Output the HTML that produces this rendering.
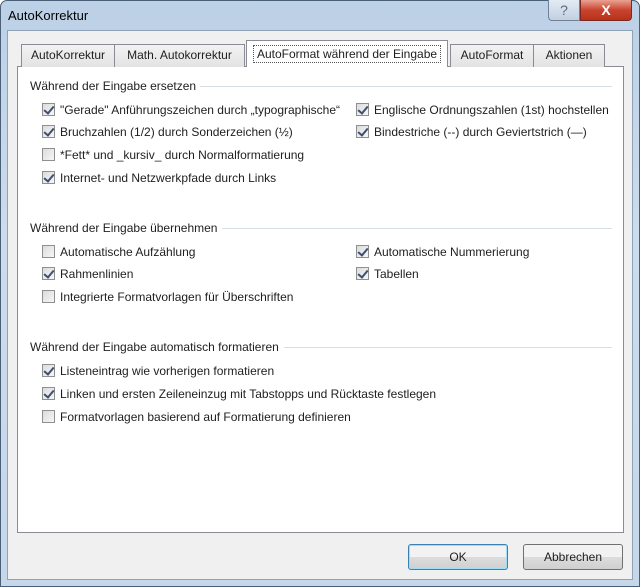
<!DOCTYPE html>
<html><head><meta charset="utf-8"><style>
*{margin:0;padding:0;box-sizing:border-box}
body{width:640px;height:587px;overflow:hidden;font-family:"Liberation Sans",sans-serif;font-size:12px;color:#1e1e1e;background:#fff}
.frame{position:absolute;left:0;top:0;width:640px;height:587px;background:linear-gradient(#bcd0e6,#cddcec 40%,#c6d7ea);border:1px solid #4a5f78;border-radius:7px 7px 0 0}
.title{position:absolute;left:8px;top:8px;font-size:13px;color:#000}
.help{position:absolute;left:548px;top:0;width:32px;height:21px;border:1px solid #6f8299;border-top:none;border-radius:0 0 0 4px;background:linear-gradient(#e3ebf4,#c2d0df);text-align:center;color:#5a6b80;font-size:14px;line-height:20px}
.close{position:absolute;left:580px;top:0;width:52px;height:21px;border:1px solid #7a2a20;border-top:none;border-radius:0 0 4px 0;background:linear-gradient(#e9a394,#c9442e 50%,#b8301a);text-align:center;color:#fff;font-weight:bold;font-size:14px;line-height:20px}
.client{position:absolute;left:7px;top:30px;width:626px;height:550px;background:#f0f0f0;border:1px solid #8ea2b8}
.panel{position:absolute;left:17px;top:66px;width:607px;height:467px;background:#fff;border:1px solid #898c95}
.tab{position:absolute;top:44px;height:23px;border:1px solid #898c95;border-bottom:none;background:linear-gradient(#f2f2f2,#e3e3e3);text-align:center;line-height:21px}
.tab.sel{top:40px;height:27px;background:#fff;line-height:27px}
.tab.sel span{border:1px dotted #555;padding:1px 3px}
.h{position:absolute;left:30px;color:#1e1e1e}
.line{position:absolute;height:1px;background:#d5dfe5;right:28px}
.cb{position:absolute;width:13px;height:13px;border:1px solid #8f8f8f;background:linear-gradient(135deg,#dcdcdc,#f6f6f6)}
.cb.c::after{content:"";position:absolute;left:3px;top:0px;width:4px;height:8px;border:solid #3c4f70;border-width:0 2px 2px 0;transform:rotate(40deg)}
.t{position:absolute;white-space:nowrap}
.btn{position:absolute;top:544px;width:100px;height:26px;border:1px solid #707070;border-radius:3px;background:linear-gradient(#f2f2f2 50%,#dddddd 50%,#cfcfcf);text-align:center;line-height:24px}
.btn.ok{border-color:#3c7fb1;box-shadow:inset 0 0 0 1px #9fdcf5}
</style></head><body>
<div class="frame"></div>
<div class="title">AutoKorrektur</div>
<div class="help">?</div>
<div class="close">X</div>
<div class="client"></div>
<div class="panel"></div>
<div class="tab" style="left:21px;width:94px">AutoKorrektur</div>
<div class="tab" style="left:114px;width:131px">Math. Autokorrektur</div>
<div class="tab" style="left:450px;width:84px">AutoFormat</div>
<div class="tab" style="left:533px;width:72px">Aktionen</div>
<div class="tab sel" style="left:246px;width:202px"><span>AutoFormat während der Eingabe</span></div>

<div class="h" style="top:79px">Während der Eingabe ersetzen</div><div class="line" style="left:200px;top:86px"></div>
<div class="cb c" style="left:42px;top:103px"></div><div class="t" style="left:60px;top:103px">"Gerade" Anführungszeichen durch „typographische“</div>
<div class="cb c" style="left:356px;top:103px"></div><div class="t" style="left:374px;top:103px">Englische Ordnungszahlen (1st) hochstellen</div>
<div class="cb c" style="left:42px;top:125px"></div><div class="t" style="left:60px;top:125px">Bruchzahlen (1/2) durch Sonderzeichen (½)</div>
<div class="cb c" style="left:356px;top:125px"></div><div class="t" style="left:374px;top:125px">Bindestriche (--) durch Geviertstrich (—)</div>
<div class="cb" style="left:42px;top:148px"></div><div class="t" style="left:60px;top:148px">*Fett* und _kursiv_ durch Normalformatierung</div>
<div class="cb c" style="left:42px;top:171px"></div><div class="t" style="left:60px;top:171px">Internet- und Netzwerkpfade durch Links</div>

<div class="h" style="top:221px">Während der Eingabe übernehmen</div><div class="line" style="left:222px;top:228px"></div>
<div class="cb" style="left:42px;top:245px"></div><div class="t" style="left:60px;top:245px">Automatische Aufzählung</div>
<div class="cb c" style="left:356px;top:245px"></div><div class="t" style="left:374px;top:245px">Automatische Nummerierung</div>
<div class="cb c" style="left:42px;top:267px"></div><div class="t" style="left:60px;top:267px">Rahmenlinien</div>
<div class="cb c" style="left:356px;top:267px"></div><div class="t" style="left:374px;top:267px">Tabellen</div>
<div class="cb" style="left:42px;top:290px"></div><div class="t" style="left:60px;top:290px">Integrierte Formatvorlagen für Überschriften</div>

<div class="h" style="top:340px">Während der Eingabe automatisch formatieren</div><div class="line" style="left:284px;top:347px"></div>
<div class="cb c" style="left:42px;top:364px"></div><div class="t" style="left:60px;top:364px">Listeneintrag wie vorherigen formatieren</div>
<div class="cb c" style="left:42px;top:387px"></div><div class="t" style="left:60px;top:387px">Linken und ersten Zeileneinzug mit Tabstopps und Rücktaste festlegen</div>
<div class="cb" style="left:42px;top:410px"></div><div class="t" style="left:60px;top:410px">Formatvorlagen basierend auf Formatierung definieren</div>

<div class="btn ok" style="left:408px">OK</div>
<div class="btn" style="left:523px">Abbrechen</div>
</body></html>
